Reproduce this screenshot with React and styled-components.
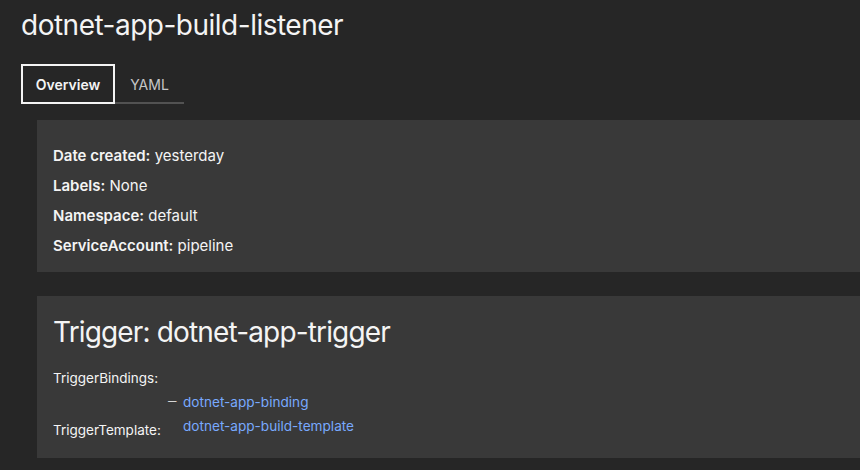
import React from "react";
import styled, { createGlobalStyle } from "styled-components";

const Global = createGlobalStyle`
  html, body { margin: 0; padding: 0; background: #262626; }
  body { font-family: "Inter", "Noto Sans", sans-serif; color: #f4f4f4; }
  * { box-sizing: border-box; }
`;

const Page = styled.div`
  width: 860px;
  height: 470px;
  overflow: hidden;
  background: #262626;
  padding: 0 0 0 21px;
`;

const Title = styled.h1`
  margin: 0;
  padding-top: 7px;
  height: 64px;
  font-size: 28px;
  line-height: 36px;
  font-weight: 400;
  letter-spacing: -0.5px;
  color: #f4f4f4;
`;

const Tabs = styled.div`
  display: flex;
  height: 40px;
`;

const Tab = styled.div`
  display: flex;
  align-items: center;
  justify-content: center;
  width: ${(p) => p.$w}px;
  height: 40px;
  font-size: 14px;
  font-weight: ${(p) => (p.$active ? 600 : 400)};
  color: ${(p) => (p.$active ? "#f4f4f4" : "#c6c6c6")};
  border: ${(p) => (p.$active ? "2px solid #f4f4f4" : "none")};
  border-bottom: 2px solid ${(p) => (p.$active ? "#f4f4f4" : "#525252")};
  padding-top: ${(p) => (p.$active ? 0 : 2)}px;
`;

const Content = styled.div`
  padding: 16px 0 0 16px;
  display: flex;
  flex-direction: column;
  gap: 24px;
`;

const Card = styled.section`
  background: #393939;
  width: 900px;
  padding: ${(p) => p.$pad};
  height: ${(p) => p.$h}px;
`;

const Field = styled.div`
  font-size: 15px;
  line-height: 30px;
  color: #f4f4f4;
`;

const Key = styled.span`
  font-weight: 600;
`;

const Heading = styled.h2`
  margin: 0;
  font-size: 28px;
  line-height: 36px;
  font-weight: 400;
  letter-spacing: -0.85px;
  color: #f4f4f4;
`;

const Grid = styled.div`
  margin-top: 18px;
  display: grid;
  grid-template-columns: 130px auto;
  font-size: 13.5px;
  color: #f4f4f4;
  align-items: start;
`;

const Label = styled.div`
  line-height: 16px;
  padding-top: ${(p) => p.$top || 0}px;
`;

const List = styled.ul`
  list-style: none;
  margin: 0;
  padding: 26px 0 0 0;
`;

const Item = styled.li`
  position: relative;
  line-height: 16px;
  &::before {
    content: "—";
    position: absolute;
    left: -15px;
    top: -1px;
    font-size: 8.5px;
    color: #f4f4f4;
  }
`;

const Value = styled.div`
  padding-top: 8px;
`;

const Link = styled.a`
  color: #78a9ff;
  font-size: 13.6px;
  text-decoration: none;
  line-height: 16px;
`;

export default function App() {
  return (
    <>
      <Global />
      <Page>
        <Title>dotnet-app-build-listener</Title>
        <Tabs>
          <Tab $active $w={94}>Overview</Tab>
          <Tab $w={69}>YAML</Tab>
        </Tabs>
        <Content>
          <Card $pad="21px 16px 0" $h={152}>
            <Field><Key>Date created:</Key> yesterday</Field>
            <Field><Key>Labels:</Key> None</Field>
            <Field><Key>Namespace:</Key> default</Field>
            <Field><Key>ServiceAccount:</Key> pipeline</Field>
          </Card>
          <Card $pad="18px 16px" $h={162}>
            <Heading>Trigger: dotnet-app-trigger</Heading>
            <Grid>
              <Label $top={2}>TriggerBindings:</Label>
              <List>
                <Item><Link href="#">dotnet-app-binding</Link></Item>
              </List>
              <Label $top={12}>TriggerTemplate:</Label>
              <Value>
                <Link href="#">dotnet-app-build-template</Link>
              </Value>
            </Grid>
          </Card>
        </Content>
      </Page>
    </>
  );
}
